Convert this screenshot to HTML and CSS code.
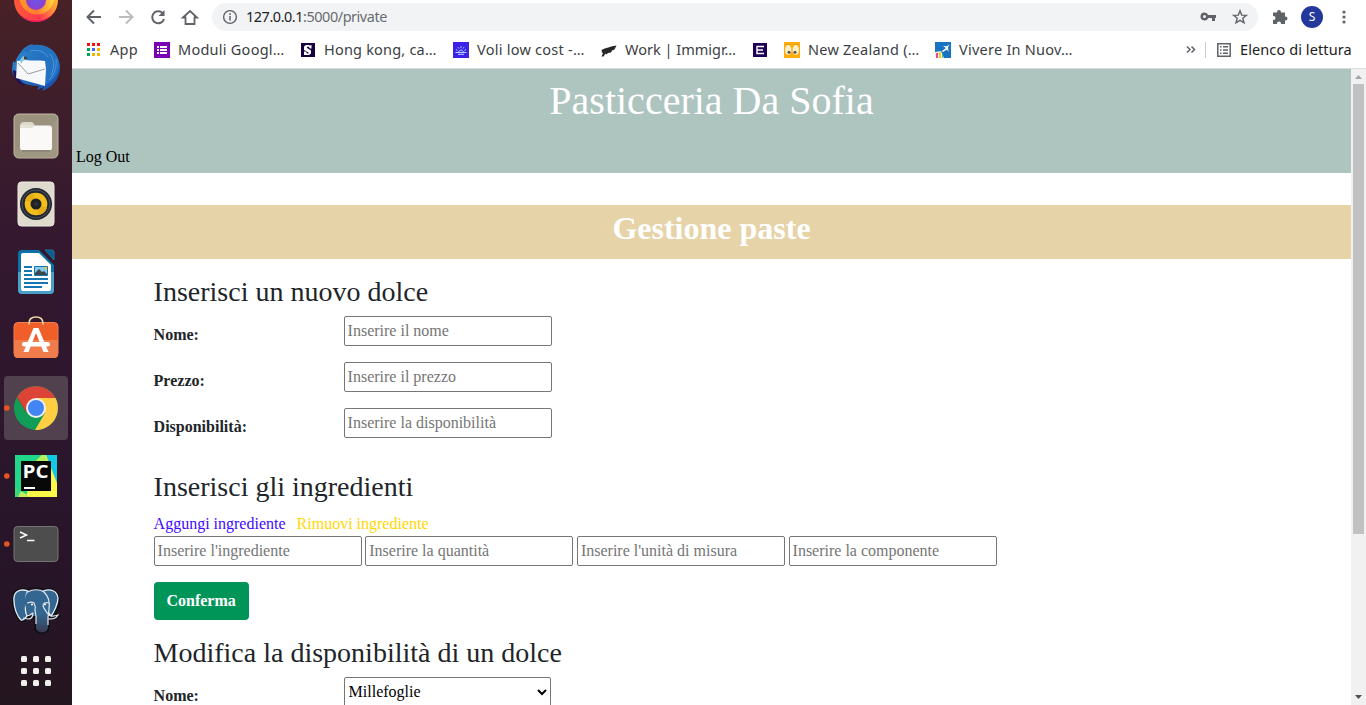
FILE: index.html
```
<!DOCTYPE html>
<html lang="it">
<head>
<meta charset="utf-8">
<title>Pasticceria Da Sofia</title>
<link rel="stylesheet" href="styles.css">
</head>
<body>
<nav class="dock">
  <svg class="slot" viewBox="0 0 72 68">
    <defs>
      <linearGradient id="fox" x1="0" y1=".6" x2="1" y2=".4"><stop offset="0" stop-color="#ff5a35"/><stop offset=".5" stop-color="#ff3850"/><stop offset="1" stop-color="#ffc02e"/></linearGradient>
      <radialGradient id="foxcore"><stop offset="0" stop-color="#6b55e8"/><stop offset="1" stop-color="#8d3fce"/></radialGradient>
      <linearGradient id="foxrim" x1="0" x2="1"><stop offset="0" stop-color="#ff9a24"/><stop offset=".5" stop-color="#ff7a30"/><stop offset="1" stop-color="#ffd93a"/></linearGradient>
    </defs>
    <circle cx="36" cy="34" r="22" fill="url(#fox)"/>
    <path d="M17 45c9 13 29 13 38 0-4 7-11 11-19 11s-15-4-19-11z" fill="#ee1466"/>
    <circle cx="37" cy="31" r="17.500" fill="url(#foxrim)"/>
    <circle cx="36" cy="34" r="10" fill="url(#foxcore)"/>
  </svg>
  <svg class="slot" viewBox="0 0 72 68">
    <defs><linearGradient id="bird" x1="0" y1="0" x2="1" y2="1"><stop offset="0" stop-color="#2f8fd0"/><stop offset="1" stop-color="#1649ab"/></linearGradient></defs>
    <path d="M21 18c2-4 7-7 12-8l-1 2c12-2 26 6 28 19 1 11-6 22-18 26l2-4-7 3 2-4C25 52 12 46 12 35l1-8 2 2c1-4 3-8 6-11z" fill="url(#bird)"/>
    <path d="M13 36c0 9 6 14 12 16l-2-3c-4-3-5-7-5-11z" fill="#21145a"/>
    <path d="M20 25c-1-5 2-7 5-7 8 0 15-1 20 8l-1 10c1 7 0 12-4 16l7-2c8-5 13-12 12-22-2-12-13-19-26-17-8 1-13 6-13 14z" fill="#2672c2"/>
    <path d="M17 27l8-1c8 1 14 0 20 1l1 8-1 17-29-8z" fill="#f7f8fa"/>
    <path d="M18 29l10 11 17-5" fill="none" stroke="#9a9ca3" stroke-width="1"/>
    <path d="M30 17c8-2 15 1 18 6M50 20c4 5 5 13 1 21M56 25c1 9-2 16-7 21" fill="none" stroke="#459cdd" stroke-width="1"/>
    <path d="M20 26l3-4 4 3-4 2-2 3z" fill="#8ccbe7"/><circle cx="25.500" cy="24" r="1.600" fill="#433a32"/>
  </svg>
  <svg class="slot" viewBox="0 0 72 68">
    <rect x="14" y="12" width="44" height="44" rx="4.500" fill="#9b927e" stroke="#c2bba9"/>
    <path d="M15 48L57 19v35q0 2-3 2H18q-3 0-3-3z" fill="#a59c88" opacity=".5"/>
    <path d="M20 24q0-4 4-4h7q2 0 3 2l1 2h13v8H20z" fill="#ddd8cc"/>
    <rect x="20" y="23.500" width="32" height="25" rx="3" fill="#faf9f7"/><path d="M20 29v-3h12l3-3h-8l-7 2z" fill="#e4e0d6"/>
    <path d="M22 48.800h28" stroke="#70685a"/>
  </svg>
  <svg class="slot" viewBox="0 0 72 68">
    <rect x="18" y="12" width="36" height="44" rx="3.500" fill="#dedace" stroke="#f0ede6"/>
    <circle cx="36" cy="34" r="16" fill="#25272e"/><circle cx="36" cy="34" r="14" fill="none" stroke="#4b5265"/>
    <circle cx="36" cy="34" r="11.300" fill="#f2be1c"/><path d="M36 34l-11-4a11 11 0 0 1 8-7zM36 34l11 4a11 11 0 0 1-8 7z" fill="#e3ae19"/><circle cx="36" cy="34" r="5.500" fill="#202124"/><circle cx="36" cy="34" r="2" fill="#303238"/>
  </svg>
  <svg class="slot" viewBox="0 0 72 68">
    <path d="M22 12h17l15 15v25q0 4-4 4H22q-4 0-4-4V16q0-4 4-4z" fill="#0c70a9"/>
    <path d="M18 34h36v18q0 4-4 4H22q-4 0-4-4z" fill="#4ba0ca"/><path d="M45 12h7q2 0 2 2v8z" fill="#0a5d90" stroke="#23729d"/>
    <path d="M23 15h16l12 12v24q0 2-2 2H23q-2 0-2-2V17q0-2 2-2z" fill="#fff"/>
    <path d="M24 29h8M24 33h8M24 37h8M24 41h24M24 45h24M24 49h18" stroke="#1676b1" stroke-width="2"/>
    <path d="M34.500 28.500h13v9h-13z" fill="#87cbea" stroke="#1676b1"/><path d="M35 37v-2l4-4 3 3 2-1 3 3v1z" fill="#3d464c"/><path d="M43.500 29h3.500v3.500z" fill="#f9c930"/>
  </svg>
  <svg class="slot" viewBox="0 0 72 68">
    <rect x="14" y="16.500" width="44" height="35" rx="4" fill="#f05f2a" stroke="#f78052"/><path d="M14 34h44v14q0 4-4 4H18q-4 0-4-4z" fill="#f07b4b"/>
    <path d="M29 18.500v-1q0-6.500 7-6.500t7 6.500v1" fill="none" stroke="#efd9a5" stroke-width="1.700"/>
    <path d="M33.500 22h5l10 24h-5L36 27l-7.500 19h-5z" fill="#fff"/><rect x="22" y="36" width="28" height="4.500" rx="2.200" fill="#fff"/>
  </svg>
  <svg class="slot" viewBox="0 0 72 68">
    <rect x="4" y="2" width="64" height="64" rx="4" fill="#51404e"/><circle cx="6.800" cy="34" r="2.800" fill="#e95420"/>
    <circle cx="36" cy="34" r="22" fill="#109d58"/>
    <path d="M17 23A22 22 0 0 1 55.500 24H36v10l-9 5z" fill="#db4437"/><path d="M55.500 24A22 22 0 0 1 35 56L45 39 36 24z" fill="#ffce43"/>
    <path d="M17 23l10 16" stroke="#a63027" stroke-width=".6"/><circle cx="36" cy="34" r="10" fill="#f1f1f1"/><circle cx="36" cy="34" r="8" fill="#4285f4"/>
  </svg>
  <svg class="slot" viewBox="0 0 72 68">
    <circle cx="6.800" cy="34" r="2.800" fill="#e95420"/><path d="M15 13h42v42H15z" fill="#21d789"/><path d="M46 13h11v31z" fill="#12c9e3"/><path d="M35 20l7-7h4l11 28v14H26z" fill="#fcf84a"/><path d="M36 20l6-7h3l3 7z" fill="#b5ee5b"/><path d="M15 43l7 12h-7z" fill="#3bd979"/><path d="M21 49l-3 6h12z" fill="#c7ed58"/>
    <path d="M21 19h30v30H21z" fill="#080808"/><path d="M24 45h11v2H24z" fill="#fff"/><text class="pc" x="22.500" y="36" textLength="26" lengthAdjust="spacingAndGlyphs">PC</text>
  </svg>
  <svg class="slot" viewBox="0 0 72 68">
    <circle cx="6.800" cy="34" r="2.800" fill="#e95420"/><rect x="14" y="16.500" width="44" height="35" rx="3.500" fill="#4d4d4d" stroke="#747474"/><path d="M20 22l6.500 3-6.500 3M27 30.500h7.500" fill="none" stroke="#fff" stroke-width="1.500"/>
  </svg>
  <svg class="slot" viewBox="0 0 72 68">
    <defs><linearGradient id="trunk" x1="0" y1="0" x2="0" y2="1"><stop offset=".55" stop-color="#336791"/><stop offset="1" stop-color="#3a3c52"/></linearGradient></defs>
    <g fill="#336791" stroke="#101018" stroke-width="4" stroke-linejoin="round"><path d="M28 13c-9-3-15 1-14 10 0 7 3 15 7 19 3 1 4-2 6-4l9 1v10c0 7 11 7 12 0v-9l10-2-4-2c3-5 5-12 4-16-2-8-10-9-15-7-5-2-10-2-15 0z"/></g>
    <path d="M28 13c-9-3-15 1-14 10 0 7 3 15 7 19 3 1 4-2 6-4-2-4-2-8-1-12 0-6-1-9 2-13zM43 13c8-3 14 0 15 7 0 6-4 14-7 18-2-2-3-4-4-7z" fill="#336791" stroke="#e9edf1" stroke-width="1.300"/>
    <path d="M28 14c4-3 12-3 16 0 5 5 6 11 5 17 0 4-1 6-1 9v9c0 7-12 7-12 0V38c-4 0-8-2-9-5-3-7-3-15 1-19z" fill="url(#trunk)"/>
    <path d="M28 14c4-3 12-3 16 0 5 5 6 11 5 17 0 4-1 6-1 9v7M36 46v-8l-1-6c1-3 0-5-1-7-3-2-6 0-7 0M49 25c-4-1-6 0-6 3 1 3 3 5 5 8 1 2 5 3 10 1-2 4-6 4-10 4M27 37c3 2 4-2 6-2 0 3-1 6-5 6l-5-1" fill="none" stroke="#dfe6ec" stroke-width="1.200"/>
    <path d="M31 26.500h2M44 26.500h2" stroke="#fff" stroke-width="1.500"/>
  </svg>
  <svg class="slot apps" viewBox="0 0 72 50"><g fill="#f0efeb"><rect x="21" y="10" width="6" height="6" rx="1.500"/><rect x="33" y="10" width="6" height="6" rx="1.500"/><rect x="45" y="10" width="6" height="6" rx="1.500"/><rect x="21" y="22" width="6" height="6" rx="1.500"/><rect x="33" y="22" width="6" height="6" rx="1.500"/><rect x="45" y="22" width="6" height="6" rx="1.500"/><rect x="21" y="34" width="6" height="6" rx="1.500"/><rect x="33" y="34" width="6" height="6" rx="1.500"/><rect x="45" y="34" width="6" height="6" rx="1.500"/></g></svg>
</nav>
<div class="browser">
  <header class="toolbar">
    <svg class="nav-icons" viewBox="0 0 140 34" fill="none" stroke="#5f6368" stroke-width="2">
      <path d="M29 17H16M22 10.500L15.500 17l6.500 6.500"/><path d="M47 17h13M54 10.500l6.500 6.500-6.500 6.500" stroke="#babcbe"/>
      <path d="M90.500 13A6 6 0 1 0 92 19"/><path d="M92.500 10v6h-6z" fill="#5f6368" stroke="none"/><path d="M111 17.500l7-6.500 7 6.500h-2.500v6.500h-9v-6.500z" stroke-width="1.800"/>
    </svg>
    <div class="omnibox">
      <svg class="info" viewBox="0 0 16 16"><circle cx="8" cy="8" r="6.400" fill="none" stroke="#5f6368" stroke-width="1.400"/><path d="M8 7v4.500M8 4.300V6" stroke="#5f6368" stroke-width="1.500"/></svg>
      <span class="url"><b class="host">127.0.0.1</b>:5000/private</span>
      <svg class="box-icons" viewBox="0 0 60 28"><path d="M4.500 8.500a4 4 0 1 0 3.700 5.500H12v3h3v-3h1v-3H8.200a4 4 0 0 0-3.700-2.500zm0 2.500a1.500 1.500 0 1 1 0 3 1.500 1.500 0 0 1 0-3z" fill="#5f6368"/><path d="M40 6.800l1.700 4.300 4.600.3-3.500 2.900 1.200 4.500-4-2.500-4 2.500 1.200-4.500-3.500-2.900 4.600-.3z" fill="none" stroke="#5f6368" stroke-width="1.400"/></svg>
    </div>
    <svg class="ext" viewBox="0 0 16 16"><path d="M1 3.500h4V3a2 2 0 0 1 4 0v.5h4v4h.5a2 2 0 0 1 0 4H13V15H9v-.5a2 2 0 0 0-4 0v.5H1v-4h.5a2 2 0 0 0 0-4H1z" fill="#5f6368"/></svg>
    <span class="avatar">S</span>
    <svg class="kebab" viewBox="0 0 6 16" fill="#5f6368"><circle cx="3" cy="3" r="1.600"/><circle cx="3" cy="8" r="1.600"/><circle cx="3" cy="13" r="1.600"/></svg>
  </header>
  <div class="bookmarks">
    <div class="mark m-app"><svg viewBox="0 0 16 16"><path d="M1 1h3v3H1zM6 1h3v3H6zM11 1h3v3h-3z" fill="#f31212"/><path d="M1 6h3v3H1zM1 11h3v3H1z" fill="#00a651"/><path d="M6 6h3v3H6z" fill="#4169f0"/><path d="M11 6h3v3h-3zM11 11h3v3h-3zM6 11h3v3H6z" fill="#f4b400"/></svg><span>App</span></div>
    <div class="mark m-forms"><svg viewBox="0 0 16 16"><path d="M0 0h16v16H0z" fill="#7900b4"/><path d="M3 4h2v2H3zm3 0h7v2H6zM3 7h2v2H3zm3 0h7v2H6zM3 10h2v2H3zm3 0h7v2H6z" fill="#fff"/></svg><span>Moduli Googl…</span></div>
    <div class="mark m-hong"><svg viewBox="0 0 16 16"><path d="M1 1h14v14H1z" fill="#170042"/><path d="M11.500 3v3.500H10L8.500 4.500 7 5v1l4 2.500v3L9 13H4V9.500h2l1 2h1.500v-1L4 8V4.500L6 3h3l1 .5z" fill="#fff"/></svg><span>Hong kong, ca…</span></div>
    <div class="mark m-voli"><svg viewBox="0 0 16 16"><path d="M0 0h16v16H0z" fill="#3b22e7"/><path d="M2.500 10.500h11M4.500 8.500L3 7.500M6 6.500l-1-1.300M8 6V4.300M10 6.500l1-1.300M11.500 8.500l1.500-1M5.500 10q2.500-4 5 0M5 12.300h6" fill="none" stroke="#b9d5ff"/></svg><span>Voli low cost -…</span></div>
    <div class="mark m-work"><svg viewBox="0 0 16 16"><path d="M.5 14.500L2 11l-1-.5L.5 8c4-2 9-3.500 15-4.500l-2 4-2.500 1-1 2-3 .5-1.500 1.500-1-1-2 3z" fill="#292626"/></svg><span>Work | Immigr…</span></div>
    <div class="mark m-e"><svg viewBox="0 0 16 16"><path d="M1 1h14v14H1z" fill="#200057"/><path d="M12 4.500H5v7h7M5 8h6" fill="none" stroke="#fff" stroke-width="1.400"/></svg></div>
    <div class="mark m-nz"><svg viewBox="0 0 16 16"><path d="M0 0h16v16H0z" fill="#ffad0b"/><ellipse cx="4.200" cy="8" rx="3.200" ry="5" fill="#fff2cb"/><ellipse cx="11.800" cy="8" rx="3.200" ry="5" fill="#fff2cb"/><circle cx="5" cy="10.300" r="1.500" fill="#555"/><circle cx="11" cy="10.300" r="1.500" fill="#555"/><path d="M1 3q3-2 6 0M9 3q3-2 6 0" fill="none" stroke="#dca023"/></svg><span>New Zealand (…</span></div>
    <div class="mark m-viv"><svg viewBox="0 0 16 16"><path d="M0 0h16v16H0z" fill="#1873c1"/><path d="M0 10l6-1 3 7H0z" fill="#f2f2db"/><path d="M1 11h2v5H1z" fill="#e9489e"/><path d="M4 10h2v6H4z" fill="#f2ce35"/><path d="M7 12h1v4H7z" fill="#5bc578"/><path d="M7 9l4-3-3-2 4 .3L15 2l-2 3 .5 5L12 7.500 8 10z" fill="#fff"/></svg><span>Vivere In Nuov…</span></div>
    <svg class="more" viewBox="0 0 10 10"><path d="M1 1.500l3 3-3 3M5.500 1.500l3 3-3 3" fill="none" stroke="#5f6368" stroke-width="1.500"/></svg>
    <div class="reading"><svg viewBox="0 0 16 16"><path d="M1.800 1.800h12.400v12.400H1.800z" fill="none" stroke="#5f6368" stroke-width="1.500"/><path d="M4 4.800h1.500M7 4.800h5M4 8h1.500M7 8h5M4 11.200h1.500M7 11.200h5" stroke="#5f6368" stroke-width="1.400"/></svg><span>Elenco di lettura</span></div>
  </div>
  <div class="viewport">
    <main class="page">
      <header class="banner"><h1 class="title">Pasticceria Da Sofia</h1><a class="logout">Log Out</a></header>
      <div class="section-bar"><h2 class="section-title">Gestione paste</h2></div>
      <div class="content">
        <h3 class="heading">Inserisci un nuovo dolce</h3>
        <div class="row"><label class="label">Nome:</label><input class="field" placeholder="Inserire il nome"></div>
        <div class="row"><label class="label">Prezzo:</label><input class="field" placeholder="Inserire il prezzo"></div>
        <div class="row"><label class="label">Disponibilità:</label><input class="field" placeholder="Inserire la disponibilità"></div>
        <h3 class="heading ingredients">Inserisci gli ingredienti</h3>
        <div class="links"><a class="add">Aggungi ingrediente</a><a class="remove">Rimuovi ingrediente</a></div>
        <div class="fields"><input class="field" placeholder="Inserire l'ingrediente"><input class="field" placeholder="Inserire la quantità"><input class="field" placeholder="Inserire l'unità di misura"><input class="field" placeholder="Inserire la componente"></div>
        <button class="confirm">Conferma</button>
        <h3 class="heading">Modifica la disponibilità di un dolce</h3>
        <div class="row"><label class="label">Nome:</label><select class="select"><option>Millefoglie</option></select></div>
      </div>
    </main>
    <div class="scrollbar"><svg viewBox="0 0 15 15"><path d="M4 10h7L7.500 6z" fill="#a3a3a3"/></svg><div class="thumb"></div><svg class="down" viewBox="0 0 15 15"><path d="M4 5h7L7.500 9z" fill="#505050"/></svg></div>
  </div>
</div>
</body>
</html>
```
FILE: styles.css
```
* { box-sizing: border-box; }
body { margin: 0; height: 705px; display: flex; overflow: hidden; background: #fff; font: 16px/24px "Liberation Serif", serif; color: #212529; }
svg { display: block; flex: none; }
.dock { width: 72px; height: 705px; flex: none; overflow: hidden; background: linear-gradient(#472126 0, #3b1d2c 20%, #34182f 33%, #2c172c 60%, #261427 85%, #24161e 100%); }
.slot { width: 72px; height: 68px; }
.slot:first-child { margin-top: -34px; }
.slot.apps { height: 50px; }
.pc { font: bold 18px "Open Sans", sans-serif; fill: #fff; }
.browser { width: 1294px; height: 705px; display: flex; flex-direction: column; }
.toolbar { height: 34px; flex: none; display: flex; align-items: center; font-family: "Noto Sans", sans-serif; }
.nav-icons { width: 140px; height: 34px; }
.omnibox { width: 1046px; height: 28px; margin-top: -1px; border-radius: 14px; background: #f1f3f4; display: flex; align-items: center; padding-left: 10px; }
.info { width: 16px; height: 16px; margin-top: 1px; }
.url { margin-left: 8px; font-size: 14.4px; letter-spacing: -.43px; flex: 1; color: #686c71; }
.host { font-weight: 400; color: #202124; }
.box-icons { width: 60px; height: 28px; margin-right: -2px; margin-top: 2px; }
.ext { width: 16px; height: 16px; margin-left: 14px; }
.avatar { width: 22px; height: 22px; border-radius: 50%; margin-left: 13px; background: #24389c; color: #fff; font-size: 12px; line-height: 22px; text-align: center; }
.kebab { width: 6px; height: 16px; margin-left: 18px; }
.bookmarks { height: 35px; flex: none; display: flex; align-items: center; padding: 0 0 3px 14px; border-bottom: 1px solid #dadce0; font: 14.5px/24px "Noto Sans", sans-serif; color: #3c4043; white-space: nowrap; }
.mark { display: flex; align-items: center; gap: 8px; flex: none; letter-spacing: .25px; }
.mark span, .reading span { margin-top: -1px; }
.mark svg, .reading svg { width: 16px; height: 16px; }
.m-app { width: 68px; letter-spacing: .3px; }
.m-forms { width: 146px; }
.m-hong { width: 153px; letter-spacing: .2px; }
.m-voli { width: 148px; }
.m-work { width: 151px; letter-spacing: 0; }
.m-e { width: 32px; }
.m-nz { width: 151px; }
.m-viv { width: 250px; }
.more { width: 10px; height: 10px; margin-left: 1px; }
.reading { margin-left: 9px; padding-left: 10px; height: 16px; border-left: 1px solid #c8cace; display: flex; align-items: center; gap: 8px; color: #202124; letter-spacing: .1px; }
.viewport { height: 636px; display: flex; overflow: hidden; }
.page { width: 1279px; overflow: hidden; }
.banner { height: 104px; padding-top: 8px; background: #aec4bf; }
.title { margin: 0 0 20px; font-weight: 400; font-size: 40px; line-height: 48px; text-align: center; color: #fff; }
.logout { display: block; margin-left: 4px; color: #000; }
.section-bar { height: 54px; margin-top: 32px; padding-top: 4px; background: #e6d3a8; }
.section-title { margin: 0; font-size: 32px; line-height: 38.4px; text-align: center; color: #fff; }
.content { padding: 16px 0 0 81.600px; }
.heading { margin: 0 0 7.400px; font-weight: 400; font-size: 28px; line-height: 33.600px; }
.row { display: flex; height: 46px; }
.label { width: 190px; padding-top: 7px; font-weight: 700; }
.field { width: 208px; height: 30px; padding: 1px 2px 1px 3px; border: 1px solid #767676; border-radius: 2px; font: 16px/24px "Liberation Serif", serif; }
.field::placeholder { color: #757575; }
.ingredients { margin: 16px 0 8.400px; }
.links { display: flex; gap: 11px; height: 24px; }
.add { color: #4008ff; }
.remove { color: #ffd700; }
.fields { display: flex; gap: 3.670px; }
.confirm { display: block; width: 95px; height: 38px; margin: 16px 0; padding: 0; border: 0; border-radius: 4px; background: #009558; color: #fff; font: bold 16px/24px "Liberation Serif", serif; }
.select { width: 207px; height: 30px; border: 1px solid #767676; border-radius: 2px; background: #fff; color: #000; font: 16px/24px "Liberation Serif", serif; }
.scrollbar { width: 15px; display: flex; flex-direction: column; background: #f1f1f1; }
.scrollbar svg { width: 15px; height: 15px; }
.thumb { height: 450px; margin: 0 2px; background: #c1c1c1; }
.scrollbar .down { margin-top: auto; }
```
